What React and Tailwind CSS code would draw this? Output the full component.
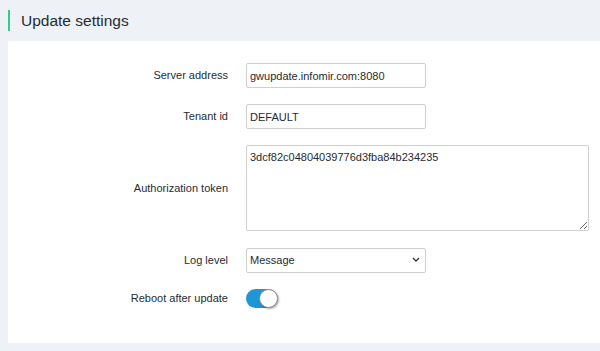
import React, { useState } from "react";

const labelCls = "w-[220px] shrink-0 text-right text-[11px] text-[#1f2c33]";
const inputCls =
  "h-[25px] w-[180px] rounded-[2px] border border-[#cfcfcf] bg-white px-[3px] text-[11px] text-[#1f2c33] outline-none";

const Row = ({ label, children }) => (
  <div className="flex items-center gap-[18px]">
    <label className={labelCls}>{label}</label>
    {children}
  </div>
);

export default function App() {
  const [server, setServer] = useState("gwupdate.infomir.com:8080");
  const [tenant, setTenant] = useState("DEFAULT");
  const [token, setToken] = useState("3dcf82c04804039776d3fba84b234235");
  const [level, setLevel] = useState("Message");
  const [reboot, setReboot] = useState(true);

  return (
    <div
      className="min-h-[351px] bg-[#eef1f5] pb-2 pl-2"
      style={{ fontFamily: '"Liberation Sans", Arial, sans-serif' }}
    >
      <div className="flex h-[41px] items-center">
        <div className="h-[21px] w-[2px] bg-[#2bd18b]" />
        <h1 className="ml-[11px] text-[15.5px] font-normal text-[#1f2c33]">
          Update settings
        </h1>
      </div>

      <div className="flex h-[302px] flex-col gap-4 bg-white pt-[22px]">
        <Row label="Server address">
          <input
            className={inputCls}
            value={server}
            onChange={(e) => setServer(e.target.value)}
          />
        </Row>
        <Row label="Tenant id">
          <input
            className={inputCls}
            value={tenant}
            onChange={(e) => setTenant(e.target.value)}
          />
        </Row>
        <Row label="Authorization token">
          <textarea
            className="h-[86px] w-[343px] rounded-[2px] border border-[#cfcfcf] bg-white px-[3px] py-[5px] text-[11px] leading-[13px] text-[#1f2c33] outline-none"
            value={token}
            onChange={(e) => setToken(e.target.value)}
          />
        </Row>
        <Row label="Log level">
          <div className="relative">
            <select
              className={inputCls + " appearance-none pr-5"}
              value={level}
              onChange={(e) => setLevel(e.target.value)}
            >
              <option>Message</option>
              <option>Warning</option>
              <option>Error</option>
              <option>Debug</option>
            </select>
            <svg
              className="pointer-events-none absolute right-[6px] top-[10px]"
              width="8"
              height="5"
              viewBox="0 0 8 5"
            >
              <path d="M1 1l3 3 3-3" fill="none" stroke="#333" strokeWidth="1.3" />
            </svg>
          </div>
        </Row>
        <Row label="Reboot after update">
          <button
            onClick={() => setReboot(!reboot)}
            className={
              "relative h-[19px] w-[31px] rounded-full " +
              (reboot ? "bg-[#1f97d6]" : "bg-[#c8ccd0]")
            }
          >
            <span
              className={
                "absolute top-0 h-[19px] w-[19px] rounded-full border border-[#8a8f94] bg-white shadow-[1px_1px_2px_rgba(0,0,0,0.35)] " +
                (reboot ? "right-[-1px]" : "left-0")
              }
            />
          </button>
        </Row>
      </div>
    </div>
  );
}
